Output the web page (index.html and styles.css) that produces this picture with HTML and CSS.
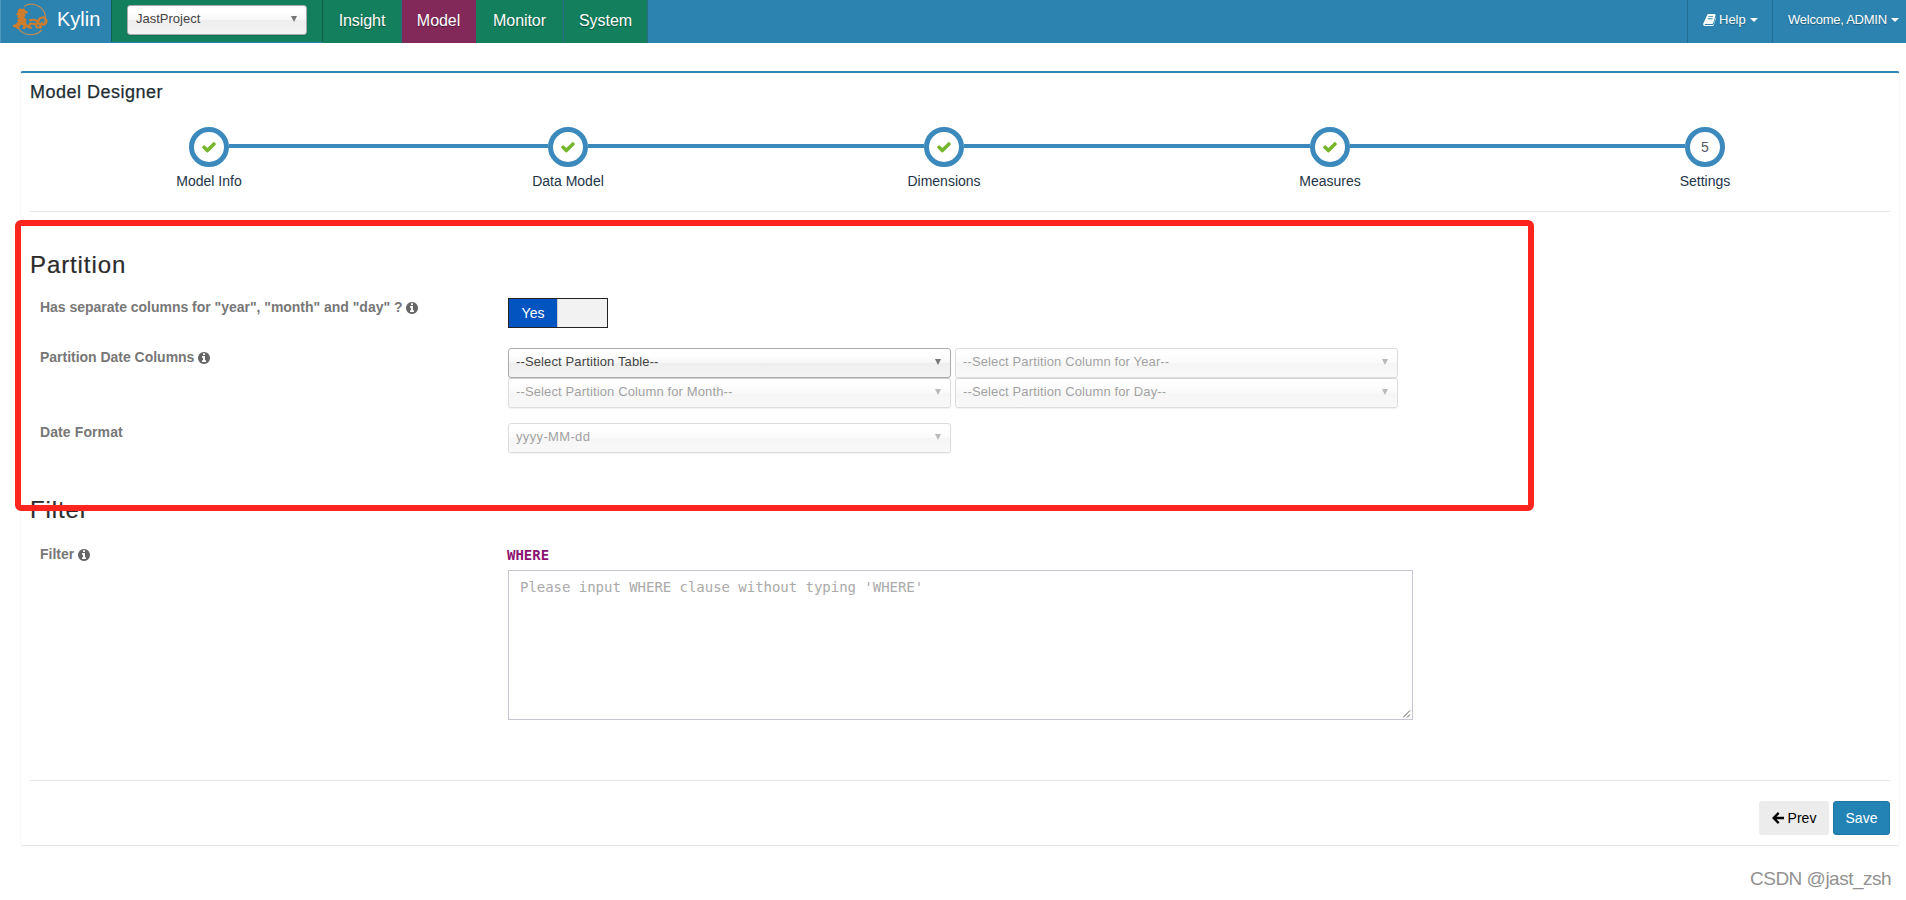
FILE: index.html
```html
<!DOCTYPE html>
<html lang="en">
<head>
<meta charset="utf-8">
<title>Kylin</title>
<link rel="stylesheet" href="styles.css">
</head>
<body>
<svg class="defs" width="0" height="0">
  <symbol id="check" viewBox="0 0 1792 1792"><path d="M1671 566q0 40-28 68l-724 724-136 136q-28 28-68 28t-68-28l-136-136-362-362q-28-28-28-68t28-68l136-136q28-28 68-28t68 28l294 295 656-657q28-28 68-28t68 28l136 136q28 28 28 68z"/></symbol>
  <symbol id="info" viewBox="0 0 1536 1536"><path d="M1024 1248v-160q0-14-9-23t-23-9h-96v-512q0-14-9-23t-23-9h-320q-14 0-23 9t-9 23v160q0 14 9 23t23 9h96v320h-96q-14 0-23 9t-9 23v160q0 14 9 23t23 9h448q14 0 23-9t9-23zm-128-896v-160q0-14-9-23t-23-9h-192q-14 0-23 9t-9 23v160q0 14 9 23t23 9h192q14 0 23-9t9-23zm640 416q0 209-103 385.500t-279.500 279.500-385.500 103-385.500-103-279.500-279.500-103-385.500 103-385.500 279.500-279.500 385.500-103 385.500 103 279.500 279.500 103 385.500z"/></symbol>
</svg>
<header class="navbar">
  <a class="brand">
    <svg class="logo" width="36" height="34" viewBox="0 0 36 34">
      <path fill="none" stroke="#b98a5c" stroke-width="1.200" d="M11 4.500C18-.5 29 3 32 12c.9 4 .2 7-1.200 9M5 26c5 8 17 9 24 2"/>
      <path fill="#cd7d2d" d="M5 8l2-2 1 1 3-.5 1.500 2 2.500 1-1 2-2.500.5 1 2-1.500 1 2.500 2.500-.5 3.500 3 3-1 2-2-1-1 2H9l1.500-3-2-1.500L6 25l1 2H4l-1-1.500L0 25v-2l3-1 2-2.500-1-1.500 2-1.500-2-1 1-2-2-1 1.500-2z"/>
      <path fill="none" stroke="#cd7d2d" stroke-width="2.200" stroke-linejoin="round" d="M16 18c2 1 4-1.500 7 .5 3 1.500 2 4-1 3.500l-5-.5-1 4 3 .5m3-4l2 3.500h4l-1-3c-3-2-2-6 2-7 4-.5 6 4 3 6.500-2 1.500-4 0-3-2"/>
    </svg>
    <span>Kylin</span>
  </a>
  <div class="project"><div class="chosen chosen-sm"><span>JastProject</span><i class="arrow"></i></div></div>
  <nav class="tabs">
    <a class="tab t1"><span>Insight</span></a><a class="tab t2 active"><span>Model</span></a><a class="tab t3"><span>Monitor</span></a><a class="tab t4"><span>System</span></a>
  </nav>
  <div class="right">
    <a class="help"><svg width="13" height="12" viewBox="0 0 13 12"><path fill="#fff" fill-rule="evenodd" d="M4.300.8Q4.600 0 5.500 0H11.500Q12.900.2 12.600 1.300L10.300 9Q10 10 9 10H2Q1.200 10.300 2 11H9.500Q10.500 11 11 9.500L12.600 3.500Q13 4 12.800 4.700L11 10.500Q10.500 12 9.500 12H2Q0 12 .1 10ZM5.500 2.200L5.200 3.100H10L10.300 2.200ZM4.900 4.300L4.600 5.200H9.400L9.700 4.300Z"/></svg><span>Help</span><i class="caret"></i></a>
    <a class="user"><span>Welcome, ADMIN</span><i class="caret"></i></a>
  </div>
</header>
<main class="panel">
  <h4 class="title"><span>Model Designer</span></h4>
  <div class="steps">
    <div class="step s1"><b class="dot"><svg width="16" height="16"><use href="#check"/></svg></b><span>Model Info</span></div>
    <i class="line l1"></i>
    <div class="step s2"><b class="dot"><svg width="16" height="16"><use href="#check"/></svg></b><span>Data Model</span></div>
    <i class="line l2"></i>
    <div class="step s3"><b class="dot"><svg width="16" height="16"><use href="#check"/></svg></b><span>Dimensions</span></div>
    <i class="line l3"></i>
    <div class="step s4"><b class="dot"><svg width="16" height="16"><use href="#check"/></svg></b><span>Measures</span></div>
    <i class="line l4"></i>
    <div class="step s5"><b class="dot">5</b><span>Settings</span></div>
  </div>
  <section class="section partition">
    <h3><span>Partition</span></h3>
    <div class="row r1"><label><span>Has separate columns for "year", "month" and "day" ?</span><svg width="12" height="12"><use href="#info"/></svg></label>
      <div class="toggle"><b>Yes</b><i></i></div></div>
    <div class="row r2"><label><span>Partition Date Columns</span><svg width="12" height="12"><use href="#info"/></svg></label>
      <div class="grid">
        <div class="chosen"><span>--Select Partition Table--</span><i class="arrow"></i></div>
        <div class="chosen off"><span>--Select Partition Column for Year--</span><i class="arrow"></i></div>
        <div class="chosen off"><span>--Select Partition Column for Month--</span><i class="arrow"></i></div>
        <div class="chosen off"><span>--Select Partition Column for Day--</span><i class="arrow"></i></div>
      </div></div>
    <div class="row r3"><label><span class="fmt-label">Date Format</span></label>
      <div class="grid"><div class="chosen off"><span class="fmt">yyyy-MM-dd</span><i class="arrow"></i></div></div></div>
  </section>
  <section class="section filter">
    <h3><span>Filter</span></h3>
    <div class="row r4"><label><span>Filter</span><svg width="12" height="12"><use href="#info"/></svg></label>
      <div class="where"><code>WHERE</code>
        <div class="area"><span>Please input WHERE clause without typing 'WHERE'</span>
          <svg width="8" height="8" viewBox="0 0 8 8" stroke="#444" stroke-width=".9"><path d="M0 7.500L7 .5M4 7.500L7 4.500"/></svg></div>
      </div></div>
  </section>
  <footer class="actions">
    <a class="btn prev"><svg width="12" height="12" viewBox="0 0 12 12" fill="none" stroke="#000" stroke-width="2.300"><path d="M12 6H2M6.700.9L1.600 6l5.100 5.100"/></svg><span>Prev</span></a>
    <a class="btn save"><span>Save</span></a>
  </footer>
</main>
<div class="highlight"></div>
<div class="watermark">CSDN @jast_zsh</div>
</body>
</html>
```
FILE: styles.css
```css
* { box-sizing: border-box; }
body { margin: 0; height: 900px; overflow: hidden; background: #fff; font: 14px/20px "Liberation Sans", Arial, sans-serif; color: #243447; position: relative; }
span { white-space: nowrap; }
.defs { position: absolute; }
.navbar { display: flex; height: 43px; background: #2c83b0; color: #fff; }
.brand { display: flex; width: 111px; padding-left: 13px; font-size: 20px; line-height: 38px; border-left: 1px solid #4f97bd; }
.brand span { margin-left: 8px; }
.logo { margin-top: 2px; margin-left: -1px; }
.project { width: 212px; height: 42px; background: #147f5c; border-left: 1px solid #0e5f50; border-right: 1px solid #0e5f45; padding: 5px 0 0 15px; }
.chosen { display: flex; justify-content: space-between; align-items: center; height: 30px; padding: 0 9px 2px 8px; border: 1px solid #aaa; border-radius: 3px; font-size: 13px; letter-spacing: .13px; color: #444; background: linear-gradient(#fff 20%, #f6f6f6 50%, #eee 52%, #f4f4f4 100%); box-shadow: 0 1px 1px rgba(0,0,0,.1); }
.grid .chosen { padding-left: 7px; }
.chosen-sm { width: 180px; letter-spacing: 0; }
.arrow { border: 3.500px solid transparent; border-top: 6px solid #777; border-bottom: 0; }
.off { opacity: .5; border-color: #bbb; }
.fmt { letter-spacing: .35px; }
.tabs { display: flex; }
.tab { text-align: center; background: #147f5c; border-right: 1px solid #256f80; font-size: 16px; letter-spacing: -.06px; line-height: 41px; text-shadow: 0 1px 1px rgba(0,0,0,.4); }
.t1 { width: 79px; } .t2 { width: 74px; } .t3 { width: 88px; } .t4 { width: 84px; }
.active { background: #82295a; border-color: #82295a; }
.right { display: flex; margin-left: auto; font-size: 13px; line-height: 39px; text-shadow: 0 1px 1px rgba(0,0,0,.3); }
.right a { display: flex; align-items: center; height: 43px; border-left: 1px solid #236e95; padding-bottom: 4px; }
.help { width: 85px; padding-left: 15px; }
.help span { margin-left: 3px; }
.user { width: 134px; padding-left: 15px; letter-spacing: -.25px; }
.caret { border: 4px solid transparent; border-top-color: #fff; border-bottom: 0; margin-left: 4px; }
.panel { margin: 28px 6px 0 20px; height: 775px; padding: 0 9px; border: 1px solid #fafafa; border-top: 2px solid #2d86b5; border-bottom-color: #e4e4e4; border-radius: 3px; }
.title { margin: 0; height: 54px; font-size: 18px; font-weight: 400; letter-spacing: .5px; line-height: 39px; color: #222d32; -webkit-text-stroke: .25px #222d32; }
.steps { display: flex; height: 85px; border-bottom: 1px solid #e7e7e7; padding-left: 159px; }
.step { width: 40px; display: flex; flex-direction: column; align-items: center; gap: 4px; }
.dot { flex: none; width: 40px; height: 40px; border: 5px solid #3c8abd; border-radius: 50%; display: flex; align-items: center; justify-content: center; font-weight: 400; color: #555b69; }
.dot svg { fill: #77b52d; }
.line { height: 4px; margin-top: 17px; background: #3c8abd; }
.l1 { width: 319px; } .l2 { width: 336px; } .l3 { width: 346px; } .l4 { width: 335px; }
.section h3 { margin: 0; height: 30px; line-height: 29px; font-size: 24px; font-weight: 400; letter-spacing: .9px; color: #2b2b2b; -webkit-text-stroke: .2px #2b2b2b; }
.partition { padding-top: 38px; height: 283px; }
.row { display: flex; }
.row label { width: 478px; padding-left: 10px; font-weight: 700; letter-spacing: -.02px; color: #777; display: flex; align-items: flex-start; gap: 4px; line-height: 19px; }
.row label svg { fill: #666; margin-top: 4px; }
.fmt-label { letter-spacing: .1px; }
.r1 { margin-top: 18px; height: 50px; }
.r2 { height: 75px; } .r3 { height: 30px; }
.toggle { display: flex; width: 100px; height: 30px; border: 1px solid #222; background: #f2f2f2; }
.toggle b { width: 49px; background: #0353c0; color: #fff; font-weight: 400; text-align: center; line-height: 28px; border-right: 1px solid #ccc; }
.grid { display: grid; grid-template-columns: 443px 443px; grid-auto-rows: 30px; column-gap: 4px; }
.filter { height: 285px; }
.r4 { margin-top: 20px; }
.where { width: 905px; }
.where code { display: block; height: 25px; margin-left: -1px; font: 700 14px/20px "DejaVu Sans Mono", monospace; color: #8c1272; }
.area { height: 150px; border: 1px solid #c6c6d2; padding: 6px 11px; font: 14px/20px "DejaVu Sans Mono", monospace; letter-spacing: -.03px; color: #aaa; position: relative; }
.area svg { position: absolute; right: 1px; bottom: 1px; }
.actions { display: flex; justify-content: flex-end; gap: 4px; border-top: 1px solid #e7e7e7; padding-top: 20px; }
.btn { height: 34px; display: flex; align-items: center; justify-content: center; gap: 4px; border-radius: 3px; }
.prev { width: 70px; background: #ececec; color: #000; }
.save { width: 57px; background: #2383b4; border: 1px solid #2077a3; color: #fff; }
.highlight { position: absolute; left: 15px; top: 220px; width: 1519px; height: 291px; border: 6px solid #ff241d; border-radius: 6px; }
.watermark { position: absolute; left: 1750px; top: 867px; font-size: 19px; line-height: 24px; letter-spacing: -.5px; color: #929292; white-space: nowrap; }
```
